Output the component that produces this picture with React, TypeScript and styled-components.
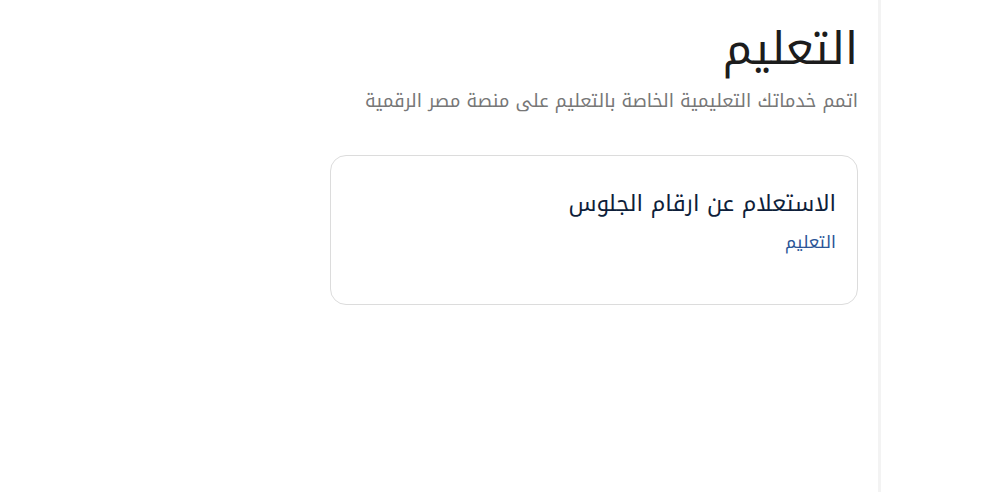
import React from "react";
import styled, { createGlobalStyle } from "styled-components";

const GlobalStyle = createGlobalStyle`
	html, body {
		margin: 0;
		padding: 0;
		background: #ffffff;
	}
	body {
		font-family: "Noto Kufi Arabic", "DejaVu Sans", sans-serif;
	}
`;

const Page = styled.div`
	direction: rtl;
	display: flex;
	height: 492px;
	overflow: hidden;
`;

const SideRail = styled.div`
	width: 106px;
	flex-shrink: 0;
	border-left: 3px solid #f3f3f3;
`;

const Main = styled.main`
	width: 528px;
	padding: 12px 20px 0 0;
`;

const Title = styled.h1`
	margin: 0;
	font-size: 45px;
	font-weight: 400;
	line-height: 74px;
	color: #1c1c1c;
`;

const Lead = styled.p`
	margin: 0;
	font-size: 18.2px;
	line-height: 30px;
	color: #777777;
`;

const Card = styled.a`
	display: block;
	margin-top: 39px;
	height: 150px;
	box-sizing: border-box;
	padding: 29px 21px 0;
	border: 1px solid #dcdcdc;
	border-radius: 16px;
	text-decoration: none;
`;

const CardTitle = styled.h2`
	margin: 0;
	font-size: 22.5px;
	font-weight: 400;
	line-height: 38px;
	color: #0e1e3a;
`;

const CardTag = styled.span`
	display: block;
	margin-top: 5px;
	font-size: 17px;
	line-height: 28px;
	color: #2b5597;
`;

const App = () => {
	return (
		<>
			<GlobalStyle />
			<Page>
				<SideRail />
				<Main>
					<Title>التعليم</Title>
					<Lead>اتمم خدماتك التعليمية الخاصة بالتعليم على منصة مصر الرقمية</Lead>
					<Card href="#">
						<CardTitle>الاستعلام عن ارقام الجلوس</CardTitle>
						<CardTag>التعليم</CardTag>
					</Card>
				</Main>
			</Page>
		</>
	);
};

export default App;
